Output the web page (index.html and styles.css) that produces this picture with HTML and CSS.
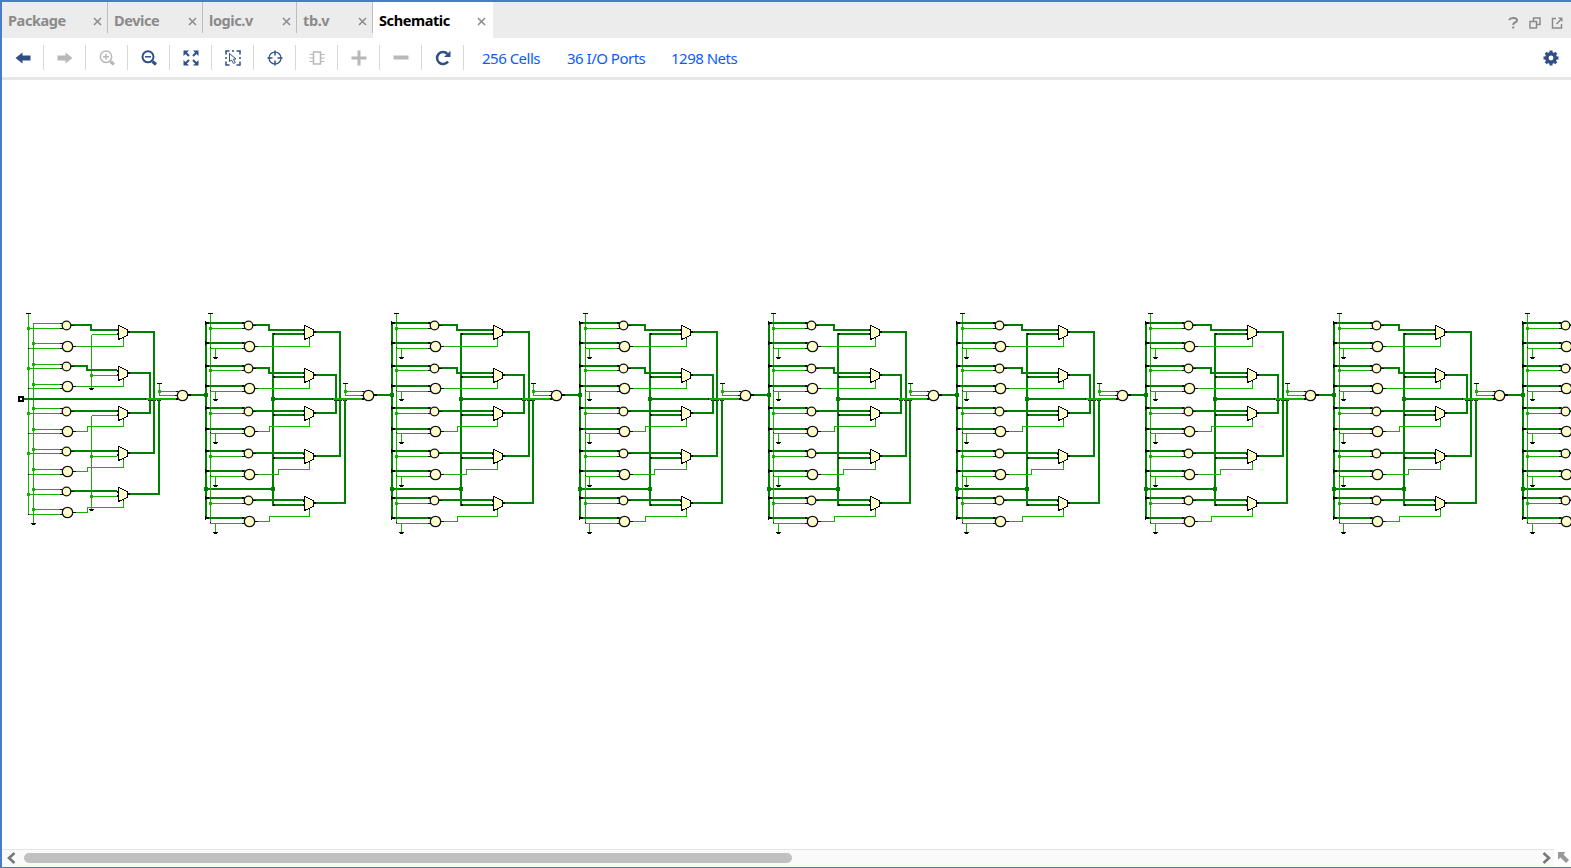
FILE: index.html
```html
<!DOCTYPE html>
<html lang="en">
<head>
<meta charset="utf-8">
<title>Schematic</title>
<link rel="stylesheet" href="styles.css">
</head>
<body>
<div class="window">
  <header class="tabs">
    <div class="tab tab-package"><span class="name">Package</span><svg class="close" viewBox="0 0 9 9"><path d="M1 1l7 7M8 1l-7 7"/></svg></div>
    <div class="tab tab-device"><span class="name">Device</span><svg class="close" viewBox="0 0 9 9"><path d="M1 1l7 7M8 1l-7 7"/></svg></div>
    <div class="tab tab-logic"><span class="name">logic.v</span><svg class="close" viewBox="0 0 9 9"><path d="M1 1l7 7M8 1l-7 7"/></svg></div>
    <div class="tab tab-tb"><span class="name">tb.v</span><svg class="close" viewBox="0 0 9 9"><path d="M1 1l7 7M8 1l-7 7"/></svg></div>
    <div class="tab active"><span class="name">Schematic</span><svg class="close" viewBox="0 0 9 9"><path d="M1 1l7 7M8 1l-7 7"/></svg></div>
    <div class="window-tools">
      <svg viewBox="0 0 12 12"><path class="w2" d="M2 3Q3 1 6 1Q10 1 10 3.4Q10 4.8 8 5.5Q6.2 6.2 6.2 8M6.2 9.5v2"/></svg>
      <svg viewBox="0 0 12 12"><path d="M1 4.5h6.5v6.5h-6.5zM4.500 4V1H11v6.500H8"/></svg>
      <svg viewBox="0 0 12 12"><path class="w15" d="M5 1.500H1.500V11H10.500V7M5.500 7L10 2.500"/><path class="solid" d="M7 .5h4.500V5z"/></svg>
    </div>
  </header>
  <nav class="toolbar">
    <span class="tool"><svg viewBox="0 0 16 16"><path class="solid" d="M0.500 8l7-5.500v3h8v5h-8v3z"/></svg></span>
    <span class="tool off"><svg viewBox="0 0 16 16"><path class="solid" d="M15.500 8l-7-5.500v3h-8v5h8v3z"/></svg></span>
    <span class="tool off"><svg viewBox="0 0 16 16"><circle class="w15" cx="7" cy="6.800" r="5.700"/><path class="w15" d="M4 6.800h6M7 3.800v6"/><path class="w3" d="M11.500 11.500l3.500 3"/></svg></span>
    <span class="tool"><svg viewBox="0 0 16 16"><circle class="w2" cx="7" cy="6.800" r="5.500"/><path class="w15" d="M4 6.800h6"/><path class="w3" d="M11.500 11.500l3.500 3"/></svg></span>
    <span class="tool"><svg viewBox="0 0 16 16"><path class="solid" d="M.5.5h5.500L.5 6zM15.500.5v5.500l-5.500-5.500zM.5 15.500v-5.500l5.500 5.500zM15.500 15.500h-5.500l5.500-5.500z"/><path class="w2" d="M2 2l4 4M14 2l-4 4M2 14l4-4M14 14l-4-4"/></svg></span>
    <span class="tool"><svg viewBox="0 0 16 16"><path class="w15" d="M1 4.500V1h3.500M7 1h2M11.500 1h3.500v3.500M15 7v2M15 11.500v3.500h-3.500M4.500 15H1v-3.500M1 7v2"/><path d="M4.500 3.500v8l2-1.500 2 3.500 1.800-1-2-3.300 2.700-.2z"/></svg></span>
    <span class="tool"><svg viewBox="0 0 16 16"><circle class="w12" cx="8" cy="8" r="6"/><path class="w15" d="M8 .5v5M8 10.500v5M.5 8h5M10.500 8h5"/></svg></span>
    <span class="tool off"><svg viewBox="0 0 16 16"><path class="w15" d="M4.500 2h7v12h-7z"/><path d="M.5 4.500h4M.5 8h4M.5 11.500h4M11.500 4.500h4M11.500 8h4M11.500 11.500h4"/></svg></span>
    <span class="tool off"><svg viewBox="0 0 16 16"><path class="w3" d="M.5 8h15M8 .5v15"/></svg></span>
    <span class="tool off"><svg viewBox="0 0 16 16"><path class="w4" d="M.5 7.500h15"/></svg></span>
    <span class="tool"><svg viewBox="0 0 16 16"><path class="w25" d="M13 11.500A6 6 0 1 1 12.500 4"/><path class="solid" d="M15.500.8V7H9z"/></svg></span>
    <a class="stat cells">256 Cells</a>
    <a class="stat ports">36 I/O Ports</a>
    <a class="stat nets">1298 Nets</a>
    <svg class="gear" viewBox="0 0 16 16"><circle class="ring" cx="8" cy="8" r="4.200"/><path class="w3" d="M8 .5v3M8 12.500v3M.5 8h3M12.500 8h3M2.700 2.700l2 2M11.300 11.300l2 2M2.700 13.300l2-2M11.300 4.700l2-2"/></svg>
  </nav>
  <main class="canvas"><svg id="schematic" width="1569" height="768" viewBox="2 80 1569 768"></svg></main>
  <footer class="scroll">
    <div class="track">
      <svg class="arrow" viewBox="0 0 9 12"><path d="M7.500 1L2 6l5.500 5"/></svg>
      <div class="thumb"></div>
      <svg class="arrow right" viewBox="0 0 9 12"><path d="M1.500 1L7 6l-5.500 5"/></svg>
    </div>
    <svg class="corner" viewBox="0 0 11 11"><path class="solid" d="M0 0h7.500L5.500 2.500 11 8 8 11 2.500 5.500 0 7.500z"/></svg>
  </footer>
</div>
<script src="schematic.js"></script>
</body>
</html>
```
FILE: styles.css
```css
* { box-sizing: border-box; }
body { margin: 0; overflow: hidden; background: #fff; font-family: "Noto Sans", "Open Sans", sans-serif; }
.window { width: 1571px; height: 868px; display: flex; flex-direction: column; border: solid #4a7bc8; border-width: 2px 0 1px 2px; }
svg { display: block; fill: none; stroke: currentColor; }
.solid { fill: currentColor; stroke: none; }
.w12 { stroke-width: 1.2; }
.w15 { stroke-width: 1.5; }
.w2 { stroke-width: 2; }
.w25 { stroke-width: 2.5; }
.w3 { stroke-width: 3; }
.w4 { stroke-width: 4; }

.tabs { height: 36px; flex: none; display: flex; background: #ececec; color: #8a8a8a; }
.tab { height: 31px; display: flex; align-items: center; justify-content: space-between; padding: 5px 5px 0 6px; border-right: 1px solid #bdbdbd; font-size: 14.5px; letter-spacing: -0.4px; font-weight: 700; line-height: 20px; white-space: nowrap; }
.tab .close { width: 9px; height: 9px; stroke-width: 1.5; margin-top: 2px; }
.tab-package { width: 106px; }
.tab-device { width: 95px; }
.tab-logic { width: 94px; }
.tab-tb { width: 76px; }
.tab.active { width: 120px; height: 36px; padding: 0 7px 0 6px; border: 0; background: #fff; color: #000; }
.tab.active .close { color: #8a8a8a; }
.window-tools { margin-left: auto; display: flex; align-items: center; gap: 10px; padding: 5px 8px 0 0; color: #8a8a8a; }
.window-tools svg { width: 12px; height: 12px; stroke-width: 1.5; }

.toolbar { height: 42px; flex: none; display: flex; align-items: center; border-bottom: 3px solid #e6e6e6; color: #2f4f87; }
.tool { width: 42px; height: 25px; display: flex; align-items: center; justify-content: center; border-right: 1px solid #d8d8d8; }
.tool svg { width: 16px; height: 16px; }
.tool.off { color: #b8b8b8; }
.stat { color: #0a5cff; font-size: 15px; letter-spacing: -0.5px; line-height: 20px; white-space: nowrap; }
.cells { margin-left: 18px; width: 85px; }
.ports { width: 104px; }
.gear { width: 16px; height: 16px; margin-left: auto; margin-right: 12px; }
.ring { stroke-width: 3.5; }

.canvas { flex: 1; min-height: 0; }
.scroll { height: 18px; flex: none; display: flex; }
.track { width: 1552px; display: flex; align-items: center; border-top: 1px solid #e4e4e4; background: #fafafa; padding: 0 3px 1px 5px; color: #777; }
.arrow { width: 9px; height: 12px; stroke-width: 2.6; }
.arrow.right { margin-left: auto; }
.thumb { width: 768px; height: 10px; margin-left: 8px; border-radius: 5px; background: #c0c0c0; }
.corner { width: 11px; height: 11px; margin: 3px 0 0 4px; color: #999; }

#schematic { shape-rendering: crispEdges; }
#schematic .bus { stroke: #008000; stroke-width: 2; }
#schematic .net { stroke: #16b000; stroke-width: 1; }
#schematic .lit { stroke: #16b000; stroke-width: 2; }
#schematic .pin { stroke: #000; stroke-width: 1; }
#schematic .pin2 { stroke: #000; stroke-width: 2; }
#schematic .cell { fill: #ffffcc; stroke: #111; stroke-width: 1.3; shape-rendering: auto; }
#schematic .mux { fill: #ffffcc; stroke: #000; stroke-width: 1; }
#schematic .node { fill: #16b000; stroke: none; }
#schematic .busnode { fill: #008000; stroke: none; }
#schematic .port { fill: #fff; stroke: #000; stroke-width: 2; }
```
FILE: schematic.js
```javascript
const layers = { wires: [], parts: [] };
const path = (cls, d) => layers.wires.push(`<path class="${cls}" d="${d}"/>`);
const mark = (cls, d) => layers.parts.push(`<path class="${cls}" d="${d}"/>`);
const circle = (x, y, r) => layers.parts.push(`<circle class="cell" cx="${x}" cy="${y}" r="${r}"/>`);
const node = (x, y) => layers.parts.push(`<rect class="node" x="${x - 1.5}" y="${y - 1.5}" width="3" height="3"/>`);
const busNode = (x, y) => layers.parts.push(`<rect class="busnode" x="${x - 2}" y="${y - 2}" width="4" height="4"/>`);
const ground = (x, y) => { mark("pin", `M${x - 2.5} ${y}H${x + 2.5}M${x - 1.5} ${y + 1}H${x + 1.5}`); };
const power = (x, y) => mark("pin", `M${x - 2.5} ${y}H${x + 2.5}`);

function gate(x, y, r, ins) {
  ins.forEach(v => mark("pin", `M${x - r - 2} ${v}H${x - r + 1}`));
  mark("pin", `M${x + r} ${y}h3`);
  circle(x, y, r);
}
function mux(x, y, sel, out) {
  mark("mux", `M${x} ${y - 7}L${x + 9} ${y - 3}V${y + 3}L${x} ${y + 7}Z`);
  mark("pin2", `M${x - 2} ${y - 2.5}h2M${x - 2} ${y + 1.500}h2M${x + 9.500} ${out}h2`);
  mark("pin", `M${sel} ${y + 4}v2`);
}
// Combines the five mux outputs and drives the next stage.
function merge(s, outs, from) {
  const [v1, v2, v3] = s.v;
  const m = s.mux + 10;
  path("bus", `M${m} ${outs[0]}H${v1}V${outs[3]}H${m}`);
  path("bus", `M${m} ${outs[1]}H${v2}V${outs[2]}H${m}`);
  path("bus", `M${m} ${outs[4]}H${v3}V400`);
  path("bus", `M${from} 399H${s.lit}`);
  path("lit", `M${s.lit} 399H${s.out - 6}`);
  [v2, v1, v3].forEach(v => mark("pin", `M${v - 2} 400.500h1M${v + 1} 400.500h1`));
  mark("pin2", `M${s.lit} 399h1M${s.out - 7} 399h2`);
  power(s.pull, 383.5);
  path("net", `M${s.pull} 383.500V395.500H${s.out - 5}M${s.pull} 391.500H${s.out - 5}`);
  node(s.pull, 391.5);
  mark("pin", `M${s.out - 7} 391.500h2M${s.out - 8} 395.500h3`);
  mark("pin2", `M${s.out + 5} 395h3`);
  circle(s.out, 395.5, 5.2);
  path("bus", `M${s.out + 5} 395H${s.next}`);
}

function firstStage() {
  const sm = [325.5, 366.5, 411.5, 451.5, 491.5], lg = [346.5, 386.5, 431.5, 471.5, 512.5];
  const sb = [323.5, 364.5, 408.5, 449.5, 489.5], sa = [328.5, 368.5, 413.5, 453.5, 494.5];
  const lb = [343.5, 384.5, 429.5, 469.5, 509.5], la = [348.5, 388.5, 433.5, 474.5, 514.5];
  const mc = [332.5, 373.5, 413.5, 453.5, 494.5], in1 = [330, 370, 411, 451, 491], in2 = [334.5, 375.5, 415.5, 456.5, 496.5];
  const so = [325, 366, 411, 451, 491], selY = [0, 0, 426.5, 467.5, 507.5];
  path("net", "M28.500 313V514.500M33.500 323V523.500M91.500 334.500V388.500M91.500 415.500V509");
  power(28.5, 313.5); ground(33.5, 523.5); ground(91.5, 388.5); ground(91.5, 509.5);
  for (let i = 0; i < 5; i++) {
    path("net", `M33.500 ${sb[i]}H62M28.500 ${sa[i]}H62M33.500 ${lb[i]}H62M28.500 ${la[i]}H62`);
    mark("pin", `M28 ${la[i]}h1`);
    if (i) node(33.5, sb[i]);
    node(33.5, lb[i]); node(28.5, sa[i]);
    const bend = i === 0 ? 91 : 87;
    path("bus", `M71 ${so[i]}H${bend}V${in1[i]}H117`);
    path("net", `M91.500 ${in2[i]}H117`);
    if (i === 1 || i > 2) node(91.5, in2[i]);
    path("net", i < 2 ? `M73 ${lg[i]}H123.500V${mc[i] + 5}` : `M73 ${lg[i]}H87.500V${selY[i]}H123.500V${mc[i] + 5}`);
    gate(66.5, sm[i], 4.3, [sb[i], sa[i]]);
    gate(67.5, lg[i], 5.2, [lb[i], la[i]]);
    mux(118.5, mc[i], 123.5, [332, 373, 413, 453, 494][i]);
  }
  merge({ mux: 118, v: [154, 150, 159], lit: 145, pull: 159.5, out: 182.5, next: 206 }, [332, 373, 413, 453, 494], 24);
  layers.parts.push('<rect class="port" x="19" y="397" width="4" height="4"/>');
}

function stage(s) {
  const sm = [325.5, 368.5, 411.5, 453.5, 500.5], lg = [346.5, 388.5, 431.5, 474.5, 521.5];
  const sd = [323, 366, 408, 451, 498], sl = [328.5, 370.5, 413.5, 456.5, 503.5];
  const ld = [343, 386, 429, 471, 518], ll = [348.5, 391.5, 433.5, 476.5, 523.5];
  const gnd = [357.5, 399.5, 442.5, 485.5, 532.5], mc = [332.5, 375.5, 413.5, 456.5, 503.5];
  const so = [325, 368, 411, 453, 500], in1 = [330, 373, 411, 453, 500], in2 = [334, 377, 415, 458, 505];
  const outs = [332, 375, 413, 456, 503], selY = [0, 0, 426.5, 469.5, 516.5];
  path("bus", `M${s.bus} 322V519M${s.join} 333V506M${s.bus} 489H${s.join}`);
  path("net", `M${s.thin} 313V523.500`);
  power(s.thin, 313.5);
  busNode(s.bus, 395); busNode(s.bus, 489); busNode(s.join, 399); busNode(s.join, 489);
  for (let i = 0; i < 5; i++) {
    path("bus", `M${s.bus} ${sd[i]}H${s.small - 4}M${s.bus} ${ld[i]}H${s.small - 4}`);
    path("net", `M${s.thin} ${sl[i]}H${s.small - 4}M${s.thin} ${ll[i]}H${s.small - 4}M${s.gnd} ${ll[i]}V${gnd[i]}`);
    mark("pin2", `M${s.bus} ${sd[i]}h3M${s.bus} ${ld[i]}h3M${s.join} ${in2[i]}h2M${s.small - 6.5} ${sd[i]}h2M${s.small - 6.5} ${ld[i]}h2`);
    mark("pin", `M${s.bus - .5} ${sd[i] - 2}v4M${s.bus - .5} ${ld[i] - 2}v4M${s.thin - .5} ${ll[i] - 1}h1`);
    node(s.thin, sl[i]); ground(s.gnd, gnd[i]);
    path("bus", `M${s.small + 4} ${so[i]}H${s.step}V${in1[i]}H${s.mux - 1}M${s.join} ${in2[i]}H${s.mux - 1}`);
    const bend = (i === 3 ? s.step2 : s.step) + .5;
    path("net", i < 2 ? `M${s.small + 7} ${lg[i]}H${s.sel}V${mc[i] + 5}` : `M${s.small + 7} ${lg[i]}H${bend}V${selY[i]}H${s.sel}V${mc[i] + 5}`);
    gate(s.small, sm[i], 4.3, [sl[i]]);
    gate(s.small + 1, lg[i], 5.2, [ll[i]]);
    mux(s.mux, mc[i], s.sel, outs[i]);
  }
  merge(s, outs, s.join);
}

firstStage();
stage({ bus: 206, thin: 210.5, gnd: 215.5, small: 248.5, step: 269, step2: 278, join: 273, mux: 304.5, sel: 309.5, v: [340, 336, 345], lit: 332, pull: 345.5, out: 368.5, next: 392 });
stage({ bus: 392, thin: 396.5, gnd: 401.5, small: 434.5, step: 457, step2: 466, join: 461, mux: 493.5, sel: 497.5, v: [529, 524, 533], lit: 521, pull: 533.5, out: 556.5, next: 580 });
const base = { bus: 580, thin: 585.5, gnd: 589.5, small: 623.5, step: 645, step2: 654, join: 650, mux: 681.5, sel: 686.5, lit: 708, pull: 722.5, out: 745.5, next: 769 };
for (let k = 0; k < 6; k++) {
  const dx = Math.round(188.6 * k);
  const odd = k % 2;
  const s = {};
  for (const key in base) s[key] = base[key] + dx;
  for (const key of ["thin", "join", "pull", "out"]) s[key] -= odd;
  if (k) s.small -= 1;
  s.v = [717 + dx, 713 + dx - odd, 722 + dx - odd];
  stage(s);
}
document.getElementById("schematic").innerHTML = layers.wires.join("") + layers.parts.join("");
```
